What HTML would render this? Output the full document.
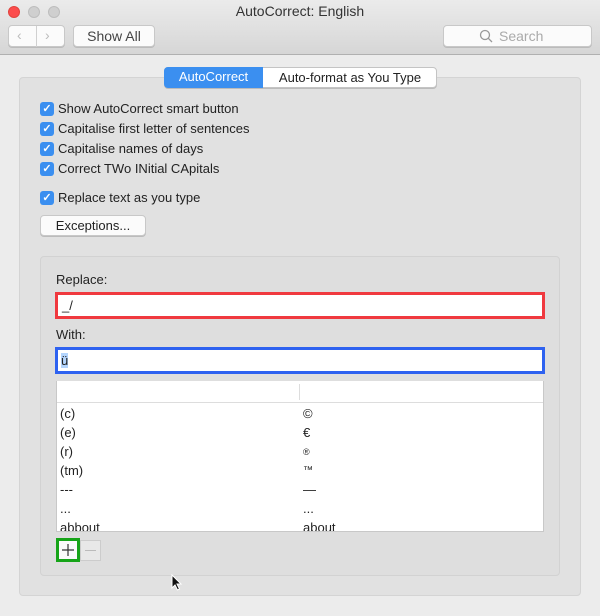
<!DOCTYPE html>
<html><head><style>
*{box-sizing:border-box;margin:0;padding:0}
body{width:600px;height:616px;background:#ececec;font-family:"Liberation Sans",sans-serif;font-size:13px;color:#222;position:relative;overflow:hidden}
.abs{position:absolute}
.tb{left:0;top:0;width:600px;height:55px;background:linear-gradient(#ebebeb,#d6d6d6);border-bottom:1px solid #b0b0b0}
.dot{width:12px;height:12px;border-radius:50%;top:6px}
.btn{background:#fbfbfb;border:1px solid #c8c8c8;border-radius:4px;box-shadow:0 1px 0 #bbb}
.cb{left:40px;width:14px;height:14px;border-radius:3px;background:#3b8ff0;color:#fff;font-size:11px;line-height:14px;text-align:center;font-weight:bold}
.lbl{left:58px;font-size:13px}
.row{left:60px;font-size:13px}
.row2{left:303px;font-size:13px}
</style></head><body>
<div class="abs tb"></div>
<div class="abs dot" style="left:8px;background:#fc4c4c;border:1px solid #e0443e"></div>
<div class="abs dot" style="left:28px;background:#cfcfcf;border:1px solid #bdbdbd"></div>
<div class="abs dot" style="left:48px;background:#cfcfcf;border:1px solid #bdbdbd"></div>
<div class="abs" style="left:0;width:600px;top:3px;text-align:center;font-size:14px;color:#333">AutoCorrect: English</div>
<div class="abs btn" style="left:8px;top:25px;width:57px;height:22px"></div>
<div class="abs" style="left:36px;top:26px;width:1px;height:21px;background:#d0d0d0"></div>
<div class="abs" style="left:17px;top:27px;color:#bbb;font-size:14px">&lsaquo;</div>
<div class="abs" style="left:45px;top:27px;color:#bbb;font-size:14px">&rsaquo;</div>
<div class="abs btn" style="left:73px;top:25px;width:82px;height:22px;text-align:center;line-height:20px;color:#444;font-size:14px">Show All</div>
<div class="abs btn" style="left:443px;top:25px;width:149px;height:22px;color:#aaa;line-height:20px;padding-left:55px;font-size:14px">Search</div>
<svg class="abs" style="left:479px;top:29px" width="14" height="14"><circle cx="6" cy="6" r="4.5" fill="none" stroke="#999" stroke-width="1.3"/><line x1="9.3" y1="9.3" x2="13" y2="13" stroke="#999" stroke-width="1.3"/></svg>

<div class="abs" style="left:19px;top:77px;width:562px;height:519px;background:#e1e1e1;border:1px solid #d4d4d4;border-radius:4px"></div>
<div class="abs" style="left:164px;top:67px;width:273px;height:21px;border:1px solid #c4c4c4;border-radius:4px;background:#fff;box-shadow:0 1px 0 #bbb"></div>
<div class="abs" style="left:164px;top:67px;width:99px;height:21px;background:#3b8ff0;border-radius:4px 0 0 4px;color:#fff;text-align:center;line-height:20px">AutoCorrect</div>
<div class="abs" style="left:263px;top:68px;width:174px;text-align:center;line-height:19px">Auto-format as You Type</div>

<div class="abs cb" style="top:102px">✓</div><div class="abs lbl" style="top:101px">Show AutoCorrect smart button</div>
<div class="abs cb" style="top:122px">✓</div><div class="abs lbl" style="top:121px">Capitalise first letter of sentences</div>
<div class="abs cb" style="top:142px">✓</div><div class="abs lbl" style="top:141px">Capitalise names of days</div>
<div class="abs cb" style="top:162px">✓</div><div class="abs lbl" style="top:161px">Correct TWo INitial CApitals</div>
<div class="abs cb" style="top:191px">✓</div><div class="abs lbl" style="top:190px">Replace text as you type</div>
<div class="abs btn" style="left:40px;top:215px;width:106px;height:21px;text-align:center;line-height:19px">Exceptions...</div>

<div class="abs" style="left:40px;top:256px;width:520px;height:320px;border:1px solid #d2d2d2;border-radius:4px;background:#dedede"></div>
<div class="abs" style="left:56px;top:272px">Replace:</div>
<div class="abs" style="left:55px;top:292px;width:490px;height:27px;border:3px solid #f0393f;background:#fff;padding:3px 4px">_/</div>
<div class="abs" style="left:56px;top:327px">With:</div>
<div class="abs" style="left:55px;top:347px;width:490px;height:27px;border:3px solid #2e62f0;background:#fff;padding:3px 3px"><span style="background:#b3d4fc">ü</span></div>
<div class="abs" style="left:56px;top:381px;width:488px;height:151px;background:#fff;border:1px solid #c8c8c8;border-top:none;overflow:hidden">
 <div style="height:22px;border-bottom:1px solid #ddd;position:relative"><div style="position:absolute;left:242px;top:3px;width:1px;height:16px;background:#ddd"></div></div>
</div>
<div class="abs row" style="top:406px">(c)</div><div class="abs row2" style="top:406px">©</div>
<div class="abs row" style="top:425px">(e)</div><div class="abs row2" style="top:425px">€</div>
<div class="abs row" style="top:444px">(r)</div><div class="abs row2" style="top:444px;font-size:9px;margin-top:3px">®</div>
<div class="abs row" style="top:463px">(tm)</div><div class="abs row2" style="top:463px;font-size:10px;margin-top:2px">™</div>
<div class="abs row" style="top:482px">---</div><div class="abs row2" style="top:482px">—</div>
<div class="abs row" style="top:501px">...</div><div class="abs row2" style="top:501px">...</div>
<div class="abs" style="left:57px;top:520px;width:486px;height:11px;overflow:hidden"><div style="position:absolute;left:3px;top:0">abbout</div><div style="position:absolute;left:246px;top:0">about</div></div>

<div class="abs" style="left:56px;top:538px;width:24px;height:24px;border:3px solid #16a418;background:#fafafa"></div>
<svg class="abs" style="left:56px;top:538px" width="24" height="24"><path d="M12 6V18M6 12H18" stroke="#333" stroke-width="1.2"/></svg>
<div class="abs" style="left:80px;top:540px;width:21px;height:21px;border:1px solid #ccc;background:#e8e8e8"></div>
<svg class="abs" style="left:80px;top:540px" width="21" height="21"><path d="M5 10.5H16" stroke="#bbb" stroke-width="1"/></svg>
<svg class="abs" style="left:171px;top:574px" width="12" height="18"><path d="M1 1 L1 14 L4 11 L6.5 16 L8.5 15 L6 10 L10 10 Z" fill="#111" stroke="#fff" stroke-width="1"/></svg>
</body></html>
